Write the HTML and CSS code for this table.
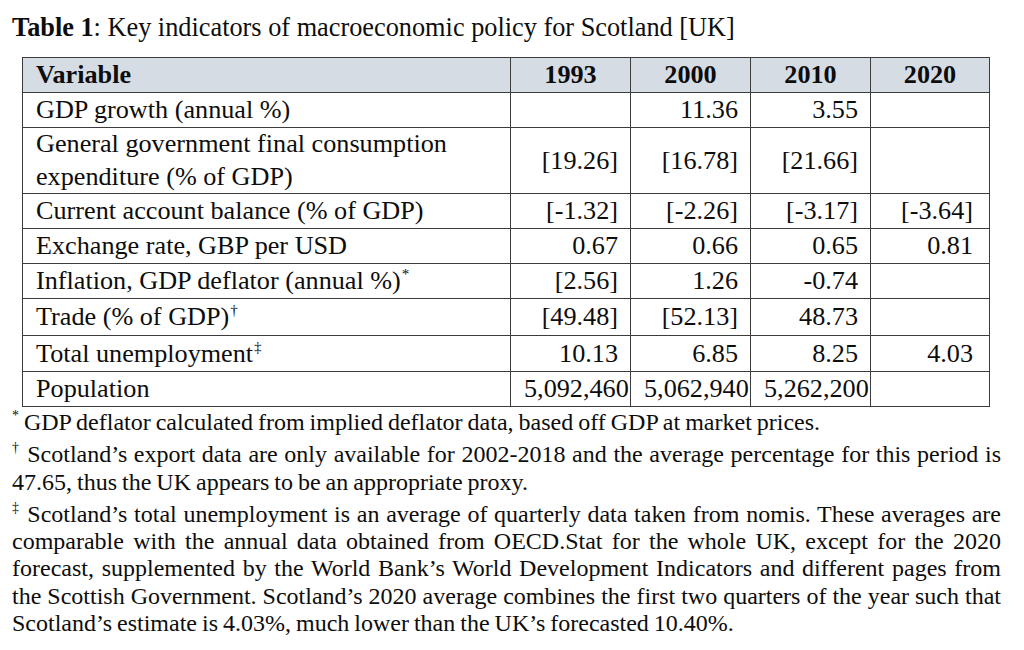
FILE: index.html
```html
<!DOCTYPE html>
<html lang="en">
<head>
<meta charset="utf-8">
<title>Table 1</title>
<link rel="stylesheet" href="styles.css">
</head>
<body>
<div class="page">
  <p class="caption"><b>Table 1</b>: Key indicators of macroeconomic policy for Scotland [UK]</p>
  <table class="indicators">
    <colgroup>
      <col class="c-var"><col class="c-y"><col class="c-y"><col class="c-y"><col class="c-last">
    </colgroup>
    <thead>
      <tr><th class="var">Variable</th><th>1993</th><th>2000</th><th>2010</th><th>2020</th></tr>
    </thead>
    <tbody>
      <tr><td class="var">GDP growth (annual %)</td><td></td><td>11.36</td><td>3.55</td><td class="last"></td></tr>
      <tr class="double"><td class="var">General government final consumption expenditure (% of GDP)</td><td>[19.26]</td><td>[16.78]</td><td>[21.66]</td><td class="last"></td></tr>
      <tr><td class="var">Current account balance (% of GDP)</td><td>[-1.32]</td><td>[-2.26]</td><td>[-3.17]</td><td class="last">[-3.64]</td></tr>
      <tr><td class="var">Exchange rate, GBP per USD</td><td>0.67</td><td>0.66</td><td>0.65</td><td class="last">0.81</td></tr>
      <tr><td class="var">Inflation, GDP deflator (annual %)<span class="mark">*</span></td><td>[2.56]</td><td>1.26</td><td>-0.74</td><td class="last"></td></tr>
      <tr class="tall"><td class="var">Trade (% of GDP)<span class="mark">†</span></td><td>[49.48]</td><td>[52.13]</td><td>48.73</td><td class="last"></td></tr>
      <tr class="tall"><td class="var">Total unemployment<span class="mark">‡</span></td><td>10.13</td><td>6.85</td><td>8.25</td><td class="last">4.03</td></tr>
      <tr><td class="var">Population</td><td>5,092,460</td><td>5,062,940</td><td>5,262,200</td><td class="last"></td></tr>
    </tbody>
  </table>
  <div class="notes">
    <p><span class="mark">*</span> GDP deflator calculated from implied deflator data, based off GDP at market prices.</p>
    <p><span class="mark">†</span> Scotland’s export data are only available for 2002-2018 and the average percentage for this period is 47.65, thus the UK appears to be an appropriate proxy.</p>
    <p><span class="mark">‡</span> Scotland’s total unemployment is an average of quarterly data taken from nomis. These averages are comparable with the annual data obtained from OECD.Stat for the whole UK, except for the 2020 forecast, supplemented by the World Bank’s World Development Indicators and different pages from the Scottish Government. Scotland’s 2020 average combines the first two quarters of the year such that Scotland’s estimate is 4.03%, much lower than the UK’s forecasted 10.40%.</p>
  </div>
</div>
</body>
</html>
```

FILE: styles.css
```css
html, body {
  margin: 0;
  padding: 0;
  background: #ffffff;
}

body {
  font-family: "Liberation Serif", "Times New Roman", serif;
  color: #0d0d0d;
}

.page {
  width: 989px;
  padding: 12px 0 0 12px;
}

.caption {
  margin: 0;
  font-size: 26.3px;
  line-height: 32px;
}

.caption b {
  font-weight: bold;
}

.indicators {
  margin: 13px 0 0 10px;
  border-collapse: collapse;
  table-layout: fixed;
  width: 967px;
  font-size: 26.2px;
}

.c-var { width: 488px; }
.c-y { width: 120px; }
.c-last { width: 119px; }

.indicators th,
.indicators td {
  border: 1.5px solid #3c3c3c;
  line-height: 34px;
  padding: 0 12px 0 13px;
  text-align: right;
  vertical-align: middle;
  white-space: nowrap;
}

.indicators td.var {
  white-space: normal;
  text-align: left;
}

.indicators tr.double td.var {
  line-height: 32.5px;
}

.indicators td.last {
  padding-right: 16px;
}

.indicators thead th {
  background: #d5dce4;
  font-weight: bold;
  text-align: center;
  padding: 0 6px;
}

.indicators thead th.var {
  text-align: left;
  padding-left: 13px;
}

.indicators tr.tall td {
  line-height: 35.5px;
}

.mark {
  font-size: 0.58em;
  line-height: 1;
  vertical-align: text-top;
}

.indicators .mark {
  margin-left: 1px;
}

.notes {
  font-size: 24px;
  line-height: 27.3px;
  word-spacing: -1px;
  text-align: justify;
}

.notes p {
  margin: 5px 0 0 0;
}

.notes p:first-child {
  margin-top: 2px;
}
```
